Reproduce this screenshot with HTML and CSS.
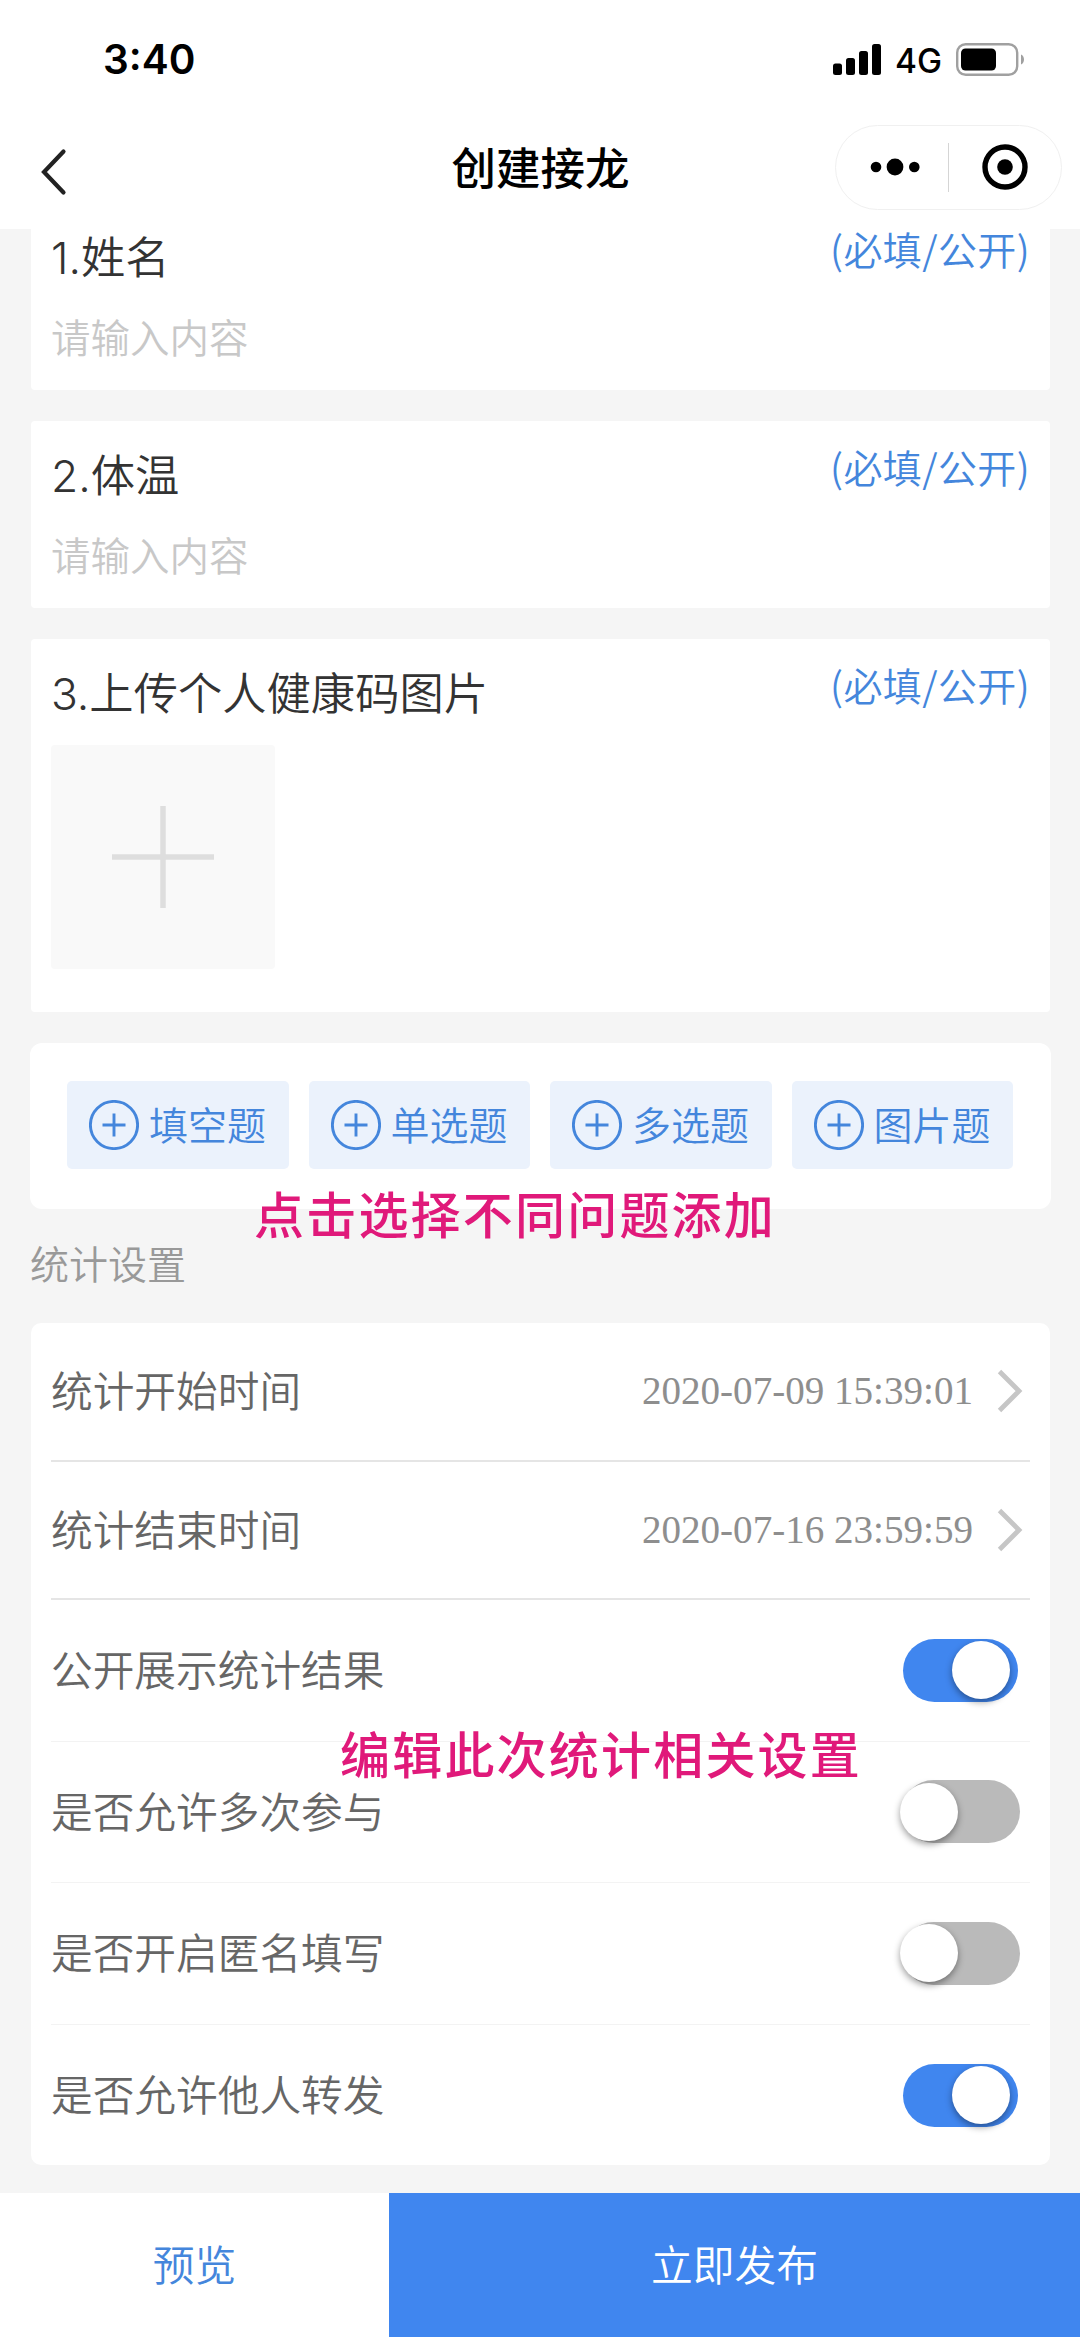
FILE: index.html
```html
<!DOCTYPE html>
<html lang="zh-CN">
<head>
<meta charset="utf-8">
<title>创建接龙</title>
<link rel="stylesheet" href="styles.css">
</head>
<body>
<svg class="defs" width="0" height="0">
  <symbol id="plus-circle" viewBox="0 0 50 50"><circle cx="25" cy="25" r="23.6"/><path d="M25 13.5v23M13.5 25h23"/></symbol>
  <symbol id="chevron" viewBox="0 0 26 44"><path d="M2.5 2.5L22 22L2.5 41.5"/></symbol>
</svg>
<div class="app">
  <header class="top">
    <div class="status">
      <span class="time">3:40</span>
      <div class="status-icons">
        <svg class="signal" width="48" height="31" viewBox="0 0 48 31"><rect x="0" y="19.500" width="9" height="11.500" rx="2.500"/><rect x="13" y="14" width="9" height="17" rx="2.500"/><rect x="26" y="7" width="9" height="24" rx="2.500"/><rect x="39" y="0" width="9" height="31" rx="2.500"/></svg>
        <span class="net">4G</span>
        <svg class="battery" width="69" height="33" viewBox="0 0 69 33"><rect class="shell" x="1.200" y="1.200" width="60" height="30.600" rx="8.500"/><rect x="5" y="5.500" width="35" height="22" rx="4.500"/><path class="nub" d="M65 11.500c4 1.500 4 8.500 0 10z"/></svg>
      </div>
    </div>
    <nav class="nav">
      <svg class="back" width="28" height="48" viewBox="0 0 28 48"><path d="M24.500 3.500L5 24L24.500 44.500"/></svg>
      <h1 class="title">创建接龙</h1>
      <div class="capsule">
        <svg class="dots" width="50" height="20" viewBox="0 0 50 20"><circle cx="6" cy="10" r="5.300"/><circle cx="25" cy="10" r="8.400"/><circle cx="44.300" cy="10" r="5.300"/></svg>
        <span class="bar"></span>
        <svg class="target" width="46" height="46" viewBox="0 0 46 46"><circle class="ring" cx="23" cy="23" r="20"/><circle cx="23" cy="23" r="7.800"/></svg>
      </div>
    </nav>
  </header>

  <main class="content">
    <section class="card question first">
      <div class="q-head"><span class="q-title">1.姓名</span><span class="tag">(必填/公开)</span></div>
      <div class="placeholder">请输入内容</div>
    </section>
    <section class="card question">
      <div class="q-head"><span class="q-title">2.体温</span><span class="tag">(必填/公开)</span></div>
      <div class="placeholder">请输入内容</div>
    </section>
    <section class="card question photo">
      <div class="q-head"><span class="q-title">3.上传个人健康码图片</span><span class="tag">(必填/公开)</span></div>
      <div class="upload"><svg width="102" height="102" viewBox="0 0 102 102"><path d="M51 0v102M0 51h102"/></svg></div>
    </section>

    <section class="card types">
      <button class="type"><svg><use href="#plus-circle"/></svg><span>填空题</span></button>
      <button class="type"><svg><use href="#plus-circle"/></svg><span>单选题</span></button>
      <button class="type"><svg><use href="#plus-circle"/></svg><span>多选题</span></button>
      <button class="type"><svg><use href="#plus-circle"/></svg><span>图片题</span></button>
      <p class="note note-types">点击选择不同问题添加</p>
    </section>

    <h2 class="section-label">统计设置</h2>

    <section class="card settings">
      <div class="row date"><span class="label">统计开始时间</span><span class="value">2020-07-09 15:39:01</span><svg class="chev"><use href="#chevron"/></svg></div>
      <div class="row date"><span class="label">统计结束时间</span><span class="value">2020-07-16 23:59:59</span><svg class="chev"><use href="#chevron"/></svg></div>
      <div class="row"><span class="label">公开展示统计结果</span><i class="switch on"></i></div>
      <div class="row"><span class="label">是否允许多次参与</span><i class="switch"></i></div>
      <div class="row"><span class="label">是否开启匿名填写</span><i class="switch"></i></div>
      <div class="row"><span class="label">是否允许他人转发</span><i class="switch on"></i></div>
      <p class="note note-settings">编辑此次统计相关设置</p>
    </section>
  </main>

  <footer class="actions">
    <button class="preview">预览</button>
    <button class="publish">立即发布</button>
  </footer>
</div>
</body>
</html>
```
FILE: styles.css
```css
* { box-sizing: border-box; margin: 0; padding: 0; }

body {
  width: 1080px;
  background: #f5f5f5;
  font-family: "Noto Sans CJK SC", sans-serif;
  font-weight: 350;
}

button { border: 0; font: inherit; }
.defs { display: block; }

.app {
  display: flex;
  flex-direction: column;
  width: 1080px;
  height: 2337px;
  overflow: hidden;
}

/* Status bar and navigation */
.top { flex: none; height: 229px; background: #fff; position: relative; z-index: 1; }

.status {
  display: flex;
  justify-content: space-between;
  align-items: center;
  height: 118px;
  padding: 0 55px 0 103px;
  font-family: Inter, sans-serif;
}
.time { font-size: 40.5px; font-weight: 600; }
.status-icons { display: flex; align-items: center; }
.net { margin: 3px 14px 0 14px; font-size: 33.5px; font-weight: 450; line-height: 40px; }
.shell { fill: none; stroke: #a0a0a0; stroke-width: 2.4; }
.nub { fill: #a0a0a0; }

.nav {
  display: grid;
  grid-template-columns: 1fr auto 1fr;
  align-items: center;
  height: 98px;
  padding: 0 18px 0 39px;
}
.back { margin-top: 9px; fill: none; stroke: #222; stroke-width: 4.2; stroke-linecap: round; }
.title { padding-bottom: 3px; font-size: 44.5px; line-height: 60px; font-weight: 500; margin-left: -20px; }
.capsule {
  display: flex;
  align-items: center;
  justify-self: end;
  width: 227px;
  height: 85px;
  padding-left: 34px;
  border: 1.500px solid #f0f0f0;
  border-radius: 43px;
}
.bar { width: 1px; height: 49px; margin: 0 33px 0 28px; background: #d5d5d5; }
.ring { fill: none; stroke: #000; stroke-width: 5.4; }

/* Cards */
.content { flex: 1; min-height: 0; padding: 0 30px 0 31px; }
.card { background: #fff; border-radius: 4px; }
.question { height: 187px; margin-bottom: 31px; padding: 21px 20px 0 20px; }
.question.first { margin-top: -26px; }
.question.photo { height: 373px; }
.q-head { display: flex; justify-content: space-between; height: 63px; }
.q-title {
  padding-top: 4px;
  font-family: Inter, "Noto Sans CJK SC", sans-serif;
  font-size: 44.3px;
  line-height: 60px;
  color: #333;
}
.tag { font-size: 39px; line-height: 48px; letter-spacing: .4px; color: #4486dc; }
.placeholder { margin-top: 20.500px; font-size: 39.5px; line-height: 56px; color: #c8c8c8; }
.upload {
  display: grid;
  place-items: center;
  width: 224px;
  height: 224px;
  margin-top: 22px;
  border-radius: 4px;
  background: #f9f9f9;
}
.upload svg { stroke: #dedede; stroke-width: 5.5; }

.types {
  position: relative;
  display: flex;
  gap: 20px;
  height: 166px;
  margin: 0 -1px;
  padding: 38px 38px 40px 37px;
  border-radius: 12px;
}
.type {
  flex: 1;
  display: flex;
  align-items: center;
  gap: 10px;
  padding-left: 22px;
  border-radius: 5px;
  background: #ebf2fc;
  color: #4486dc;
  font-size: 39px;
  line-height: 56px;
  white-space: nowrap;
}
.type span { padding-bottom: 5px; }
.type svg { flex: none; width: 50px; height: 50px; fill: none; stroke: #4486dc; stroke-width: 2.9; }

.note {
  position: absolute;
  color: #e0197a;
  font-size: 50px;
  line-height: 60px;
  letter-spacing: 2.2px;
  font-weight: 500;
  white-space: nowrap;
}
.note-types { left: 224px; top: 139px; }
.note-settings { left: 309px; top: 399px; }

.section-label { margin-left: -1px; padding: 25px 0 33px; font-size: 39px; line-height: 56px; font-weight: 350; color: #999; }

/* Settings list */
.settings { position: relative; height: 842px; padding: 0 20px; border-radius: 10px; }
.row {
  display: flex;
  align-items: center;
  justify-content: space-between;
  height: 141.500px;
  border-bottom: 1.500px solid #f3f3f3;
  color: #666;
  font-size: 41.7px;
  line-height: 60px;
}
.row:nth-child(6) { border: 0; }
.row.date { height: 138.500px; border-bottom: 2px solid #e5e5e5; }
.label { padding-bottom: 4px; }
.value {
  margin-left: auto;
  font-family: "Liberation Serif", serif;
  font-size: 39.1px;
  color: #8e8e8e;
}
.chev { width: 26px; height: 44px; margin: 0 7px 0 24px; fill: none; stroke: #c6c6c6; stroke-width: 4.8; }
.switch {
  display: flex;
  align-items: center;
  width: 118px;
  height: 63px;
  margin-right: 10px;
  border-radius: 32px;
  background: #bababa;
}
.switch::before {
  content: "";
  width: 58px;
  height: 58px;
  margin-left: -2px;
  border-radius: 50%;
  background: #fff;
  box-shadow: 0 3px 7px rgba(0, 0, 0, .4);
}
.switch.on { width: 115px; margin-right: 12px; background: #4086ef; }
.switch.on::before { margin-left: 49px; }

/* Bottom actions */
.actions { flex: none; display: flex; height: 144px; font-size: 41.8px; line-height: 60px; }
.actions button { padding-bottom: 4px; }
.preview { width: 389px; background: #fff; color: #4486dc; }
.publish { flex: 1; background: #4086ef; color: #fff; }
```
